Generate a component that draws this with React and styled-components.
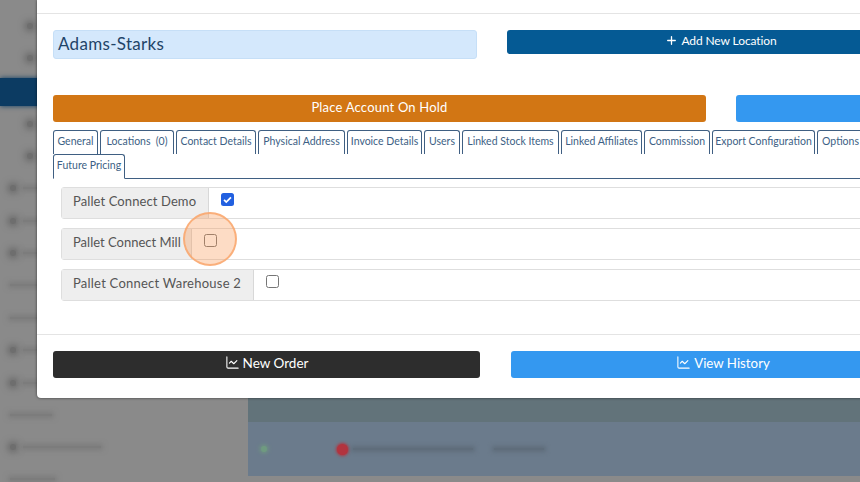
import React from "react";
import styled, { createGlobalStyle } from "styled-components";
import { LineChart, Plus } from "lucide-react";

const Global = createGlobalStyle`
  html, body {
    margin: 0;
    padding: 0;
    width: 860px;
    height: 482px;
    overflow: hidden;
    background: #8a8a8a;
  }
  * { box-sizing: border-box; }
`;

const Page = styled.div`
  position: relative;
  width: 860px;
  height: 482px;
  overflow: hidden;
  font-family: "Lato", "Noto Sans", sans-serif;
`;

const Backdrop = styled.div`
  display: flex;
  height: 100%;
`;

const Side = styled.div`
  width: 248px;
  display: flex;
  flex-direction: column;
  background: #8a8a8a;
  padding-top: 10px;
`;

const SideItem = styled.div`
  height: ${({ $h }) => $h || 32.4}px;
  flex: none;
  display: flex;
  align-items: center;
  gap: 7px;
  padding-left: ${({ $indent }) => ($indent ? 27 : 10)}px;
  background: ${({ $active }) => ($active ? "#0c3b62" : "transparent")};
  box-shadow: ${({ $active }) => ($active ? "0 0 5px #0c3b62" : "none")};
`;

const SideDot = styled.span`
  width: 6px;
  height: 6px;
  border-radius: 50%;
  background: #6e6e6e;
  box-shadow: 0 0 6px 3px #6e6e6e;
`;

const SideLabel = styled.span`
  width: ${({ $w }) => $w}px;
  height: 2px;
  background: #7c7c7c;
  box-shadow: 0 0 5px 2px #7c7c7c;
`;

const Main = styled.div`
  flex: 1;
  display: flex;
  flex-direction: column;
  justify-content: flex-end;
`;

const MainRow = styled.div`
  height: ${({ $h }) => $h}px;
  background: ${({ $bg }) => $bg};
  display: flex;
  align-items: center;
  gap: 70px;
  padding-left: 13px;
`;

const GreenDot = styled.span`
  width: 6px;
  height: 6px;
  border-radius: 50%;
  background: #6f9a80;
  box-shadow: 0 0 4px 1px #6f9a80;
`;

const RedRow = styled.span`
  display: flex;
  align-items: center;
  gap: 5px;
`;

const RedDot = styled.span`
  width: 11px;
  height: 11px;
  border-radius: 50%;
  background: #b2343f;
  box-shadow: 0 0 3px 1px #b2343f;
`;

const MainText = styled.span`
  width: ${({ $w }) => $w}px;
  height: 2px;
  margin-right: 16px;
  background: #5f6d7b;
  box-shadow: 0 0 4px 2px #5f6d7b;
`;

const Modal = styled.div`
  position: absolute;
  left: 37px;
  top: 0;
  width: 914px;
  height: 398px;
  background: #fff;
  border-radius: 0 0 4px 4px;
  box-shadow: 0 0 3px rgba(0, 0, 0, 0.6);
  display: flex;
  flex-direction: column;
`;

const ModalHead = styled.div`
  height: 14px;
  border-bottom: 1px solid #e4e4e4;
`;

const ModalBody = styled.div`
  flex: 1;
  padding: 16px 16px 0;
`;

const TopRow = styled.div`
  display: flex;
  gap: 30px;
  height: 65px;
  align-items: flex-start;
`;

const NameInput = styled.div`
  width: 424px;
  height: 29px;
  flex: none;
  background: #d4e8fc;
  border: 1px solid #c6dff7;
  border-radius: 3px;
  color: #1f4468;
  font-size: 17px;
  letter-spacing: 0.3px;
  line-height: 25px;
  padding-left: 4px;
`;

const Btn = styled.div`
  flex: ${({ $w }) => ($w ? "none" : "1")};
  width: ${({ $w }) => ($w ? `${$w}px` : "auto")};
  height: ${({ $h }) => $h}px;
  background: ${({ $bg }) => $bg};
  color: #fff;
  border-radius: 3px;
  font-size: ${({ $fs }) => $fs}px;
  letter-spacing: ${({ $ls }) => $ls || 0}px;
  padding-bottom: 4px;
  display: flex;
  align-items: center;
  justify-content: center;
  gap: 3px;
`;

const HoldRow = styled.div`
  display: flex;
  gap: 30px;
`;

const Tabs = styled.div`
  display: flex;
  flex-wrap: wrap;
  column-gap: 2px;
  margin-top: 8px;
  border-bottom: 1px solid #3f5f82;
  height: 49px;
  align-content: flex-start;
`;

const Tab = styled.div`
  width: ${({ $w }) => $w}px;
  height: ${({ $last }) => ($last ? 25 : 24)}px;
  border: 1px solid #3f5f82;
  border-bottom: ${({ $last }) => ($last ? "1px solid #fff" : "none")};
  border-radius: 3px 3px 0 0;
  background: #fff;
  color: #3d5f85;
  font-size: 10.5px;
  line-height: 20px;
  text-align: center;
  white-space: nowrap;
`;

const Rows = styled.div`
  display: flex;
  flex-direction: column;
  gap: 9px;
  margin: 8px 0 0 8px;
`;

const CheckRow = styled.div`
  display: flex;
  height: 32px;
  border: 1px solid #dedede;
  border-radius: 3px;
`;

const RowLabel = styled.div`
  width: ${({ $w }) => $w}px;
  background: #eeeeee;
  border-right: 1px solid #d8d8d8;
  color: #555;
  font-size: 13px;
  letter-spacing: ${({ $ls }) => $ls}px;
  line-height: 27px;
  padding-left: 11px;
  white-space: nowrap;
`;

const RowCheck = styled.div`
  flex: 1;
  padding: 5px 0 0 12px;
`;

const Box = styled.div`
  width: 13px;
  height: 13px;
  border-radius: 2.5px;
  border: ${({ $on }) => ($on ? "none" : "1px solid #767676")};
  background: ${({ $on }) => ($on ? "#2260e0" : "#fff")};
  display: flex;
  align-items: center;
  justify-content: center;
`;

const Highlight = styled.div`
  position: absolute;
  left: 183px;
  top: 212px;
  width: 54px;
  height: 54px;
  border-radius: 50%;
  background: rgba(250, 150, 80, 0.33);
  border: 2px solid rgba(250, 165, 105, 0.8);
`;

const ModalFoot = styled.div`
  height: 64px;
  border-top: 1px solid #e4e4e4;
  padding: 16px 16px 0;
  display: flex;
  gap: 31px;
`;

const Check = () => (
  <svg width="11" height="11" viewBox="0 0 16 16" fill="none">
    <path d="M3 8.5l3.2 3.2L13 4.8" stroke="#fff" strokeWidth="2.6" />
  </svg>
);

const tabs = [
  ["General", 45],
  ["Locations\u2002(0)", 74],
  ["Contact Details", 80],
  ["Physical Address", 87],
  ["Invoice Details", 75],
  ["Users", 36],
  ["Linked Stock Items", 97],
  ["Linked Affiliates", 81],
  ["Commission", 66],
  ["Export Configuration", 103],
  ["Options", 47],
];

const rows = [
  { name: "Pallet Connect Demo", w: 147, ls: 0.1, on: true },
  { name: "Pallet Connect Mill", w: 130, ls: 0 },
  { name: "Pallet Connect Warehouse 2", w: 192, ls: 0.23 },
];

const App = () => (
  <Page>
    <Global />
    <Backdrop>
      <Side>
        <SideItem $h={32} $indent><SideDot /><SideLabel $w={30} /></SideItem>
        <SideItem $h={32} $indent><SideDot /><SideLabel $w={30} /></SideItem>
        <SideItem $h={4} />
        <SideItem $h={28} $active />
        <SideItem $h={2} />
        <SideItem $h={32} $indent><SideDot /><SideLabel $w={30} /></SideItem>
        <SideItem $h={32} $indent><SideDot /><SideLabel $w={30} /></SideItem>
        <SideItem><SideDot /><SideLabel $w={30} /></SideItem>
        <SideItem><SideDot /><SideLabel $w={40} /></SideItem>
        <SideItem><SideDot /><SideLabel $w={30} /></SideItem>
        <SideItem><SideLabel $w={40} /></SideItem>
        <SideItem><SideLabel $w={40} /></SideItem>
        <SideItem><SideDot /><SideLabel $w={30} /></SideItem>
        <SideItem><SideDot /><SideLabel $w={40} /></SideItem>
        <SideItem><SideLabel $w={42} /></SideItem>
        <SideItem><SideDot /><SideLabel $w={78} /></SideItem>
        <SideItem $h={30}><SideLabel $w={45} /></SideItem>
      </Side>
      <Main>
        <MainRow $h={24} $bg="#62737a" />
        <MainRow $h={54} $bg="#6b7b8c">
          <GreenDot />
          <RedRow>
            <RedDot />
            <MainText $w={120} />
            <MainText $w={50} />
          </RedRow>
        </MainRow>
        <MainRow $h={6} $bg="#8a8a8a" />
      </Main>
    </Backdrop>
    <Modal>
      <ModalHead />
      <ModalBody>
        <TopRow>
          <NameInput>Adams-Starks</NameInput>
          <Btn $h={24} $bg="#055a94" $fs={12} $ls={-0.1}>
            <Plus size={13} strokeWidth={2.4} />
            Add New Location
          </Btn>
        </TopRow>
        <HoldRow>
          <Btn $w={653} $h={27} $bg="#d27614" $fs={13} $ls={0.2}>Place Account On Hold</Btn>
          <Btn $h={27} $bg="#3498f0" $fs={13} />
        </HoldRow>
        <Tabs>
          {tabs.map(([name, w]) => (
            <Tab key={name} $w={w}>{name}</Tab>
          ))}
          <Tab $w={72} $last>Future Pricing</Tab>
        </Tabs>
        <Rows>
          {rows.map((r) => (
            <CheckRow key={r.name}>
              <RowLabel $w={r.w} $ls={r.ls}>{r.name}</RowLabel>
              <RowCheck>
                <Box $on={r.on}>{r.on && <Check />}</Box>
              </RowCheck>
            </CheckRow>
          ))}
        </Rows>
      </ModalBody>
      <ModalFoot>
        <Btn $w={427} $h={27} $bg="#2d2d2d" $fs={13.5}>
          <LineChart size={15} strokeWidth={1.7} />
          New Order
        </Btn>
        <Btn $h={27} $bg="#3498f0" $fs={13.3}>
          <LineChart size={15} strokeWidth={1.7} />
          View History
        </Btn>
      </ModalFoot>
    </Modal>
    <Highlight />
  </Page>
);

export default App;
